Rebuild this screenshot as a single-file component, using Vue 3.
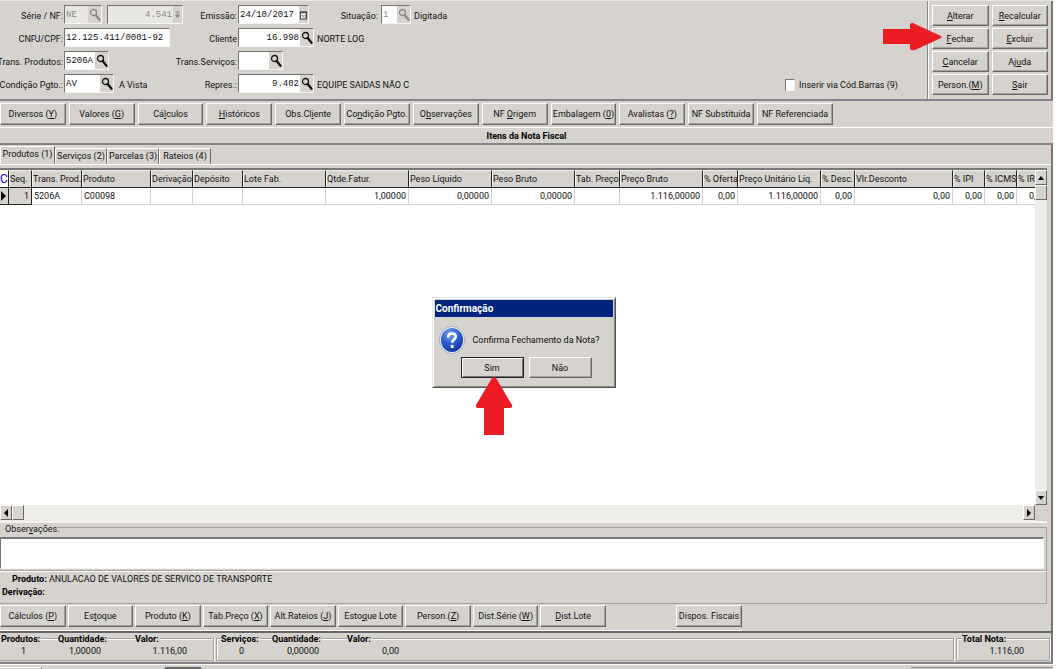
<script setup>
import { ref } from 'vue'

const split = (s) => {
  const i = s.indexOf('&')
  return i < 0 ? [s, '', ''] : [s.slice(0, i), s[i + 1], s.slice(i + 2)]
}
const actions = ['&Alterar', '&Recalcular', '&Fechar', '&Excluir', '&Cancelar', 'Aj&uda', 'Person.(&M)', '&Sair'].map(split)
const toolbar = ['Diversos (&Y)', 'Valores (&G)', 'Cá&lculos', '&Históricos', 'Obs.Cl&iente', 'Co&ndição Pgto.', 'O&bservações', 'NF &Origem', 'Embalagem (&0)', 'Avalistas (&?)', 'NF Substituída', 'NF Referenciada'].map(split)
const lower = ['Cálculos (&P)', 'Es&toque', 'Produto (&K)', 'Tab.Preço (&X)', 'Alt.Rateios (&J)', 'Esto&que Lote', 'Person.(&Z)', 'Dist.Série (&W)', '&Dist.Lote', 'Dispos. Fiscais'].map(split)
const tabs = ['Produtos (1)', 'Serviços (2)', 'Parcelas (3)', 'Rateios (4)']
const active = ref(0)
const columns = [
  ['C', 9, ''], ['Seq.', 23, '1'], ['Trans. Prod.', 50, '5206A'], ['Produto', 69, 'C00098'], ['Derivação', 42, ''],
  ['Depósito', 50, ''], ['Lote Fab.', 83, ''], ['Qtde.Fatur.', 83, '1,00000'], ['Peso Líquido', 83, '0,00000'],
  ['Peso Bruto', 83, '0,00000'], ['Tab. Preço', 45, ''], ['Preço Bruto', 83, '1.116,00000'], ['% Oferta', 35, '0,00'],
  ['Preço Unitário Líq.', 83, '1.116,00000'], ['% Desc.', 34, '0,00'], ['Vlr.Desconto', 98, '0,00'], ['% IPI', 32, '0,00'],
  ['% ICMS', 32, '0,00'], ['% IR', 32, '0,00']
]
const form = ref({
  serie: 'NE', nf: '4.541', emissao: '24/10/2017', situacao: '1', cnpj: '12.125.411/0001-92',
  cliente: '16.998', transProd: '5206A', transServ: '', pgto: 'AV', repres: '9.402', barras: false, obs: ''
})
</script>

<template>
  <div class="window">
    <svg class="defs" aria-hidden="true">
      <symbol id="lens" viewBox="0 0 12 14">
        <circle cx="4.5" cy="4.5" r="3" fill="none" stroke="currentColor" stroke-width="1.3" />
        <path d="M6.7 7 10.5 11.8" fill="none" stroke="currentColor" stroke-width="2.2" stroke-linecap="round" />
      </symbol>
    </svg>

    <header class="top">
      <form class="fields" @submit.prevent>
        <div class="row">
          <label for="serie" class="lab">Série / NF:</label>
          <div class="cell first">
            <span class="box w37 off"><input id="serie" v-model="form.serie" disabled><button type="button" aria-label="Pesquisar série" disabled><svg><use href="#lens" /></svg></button></span>
            <span class="box w75 off"><input v-model="form.nf" class="num" aria-label="Número da NF" disabled><button type="button" class="slim" aria-label="Ajustar número" disabled><svg viewBox="0 0 8 14"><path d="M2 4H6M4 4V6M2 7H6L4 9.500Z" fill="currentColor" stroke="currentColor" stroke-width="1" /></svg></button></span>
          </div>
          <label for="emissao" class="lab">Emissão:</label>
          <div class="cell">
            <span class="box w70"><input id="emissao" v-model="form.emissao"><button type="button" class="slim" aria-label="Calendário"><svg viewBox="0 0 10 14"><path d="M1.500 3.500H8.500V11.500H1.500ZM1 4.500H9" fill="#fff" stroke="#222" /><path d="M3 7.500H4.500V10M6 7H7.500V9.500H6" fill="none" stroke="#444" stroke-width=".8" /></svg></button></span>
            <label for="situacao" class="lab sit">Situação:</label>
            <span class="box w30 off white"><input id="situacao" v-model="form.situacao" disabled><button type="button" aria-label="Pesquisar situação" disabled><svg><use href="#lens" /></svg></button></span>
            <span class="desc">Digitada</span>
          </div>
        </div>
        <div class="row">
          <label for="cnpj" class="lab">CNPJ/CPF:</label>
          <div class="cell first"><span class="box w105"><input id="cnpj" v-model="form.cnpj"></span></div>
          <label for="cliente" class="lab">Cliente</label>
          <div class="cell">
            <span class="box w75"><input id="cliente" v-model="form.cliente" class="num"><button type="button" aria-label="Pesquisar cliente"><svg><use href="#lens" /></svg></button></span>
            <span class="desc">NORTE LOG</span>
          </div>
        </div>
        <div class="row">
          <label for="tprod" class="lab">Trans. Produtos:</label>
          <div class="cell first"><span class="box w45"><input id="tprod" v-model="form.transProd"><button type="button" aria-label="Pesquisar transação de produtos"><svg><use href="#lens" /></svg></button></span></div>
          <label for="tserv" class="lab">Trans.Serviços:</label>
          <div class="cell"><span class="box w45"><input id="tserv" v-model="form.transServ"><button type="button" aria-label="Pesquisar transação de serviços"><svg><use href="#lens" /></svg></button></span></div>
        </div>
        <div class="row">
          <label for="pgto" class="lab">Condição Pgto.:</label>
          <div class="cell first">
            <span class="box w50"><input id="pgto" v-model="form.pgto"><button type="button" aria-label="Pesquisar condição"><svg><use href="#lens" /></svg></button></span>
            <span class="desc">A Vista</span>
          </div>
          <label for="repres" class="lab">Repres.:</label>
          <div class="cell">
            <span class="box w75"><input id="repres" v-model="form.repres" class="num"><button type="button" aria-label="Pesquisar representante"><svg><use href="#lens" /></svg></button></span>
            <span class="desc">EQUIPE SAIDAS NÃO C</span>
          </div>
          <label class="check"><input v-model="form.barras" type="checkbox">Inserir via Cód.Barras (9)</label>
        </div>
      </form>
      <div class="actions">
        <button v-for="(b, i) in actions" :key="i" class="btn">{{ b[0] }}<u>{{ b[1] }}</u>{{ b[2] }}</button>
        <svg class="arrow-right" viewBox="0 0 60 28" aria-hidden="true"><path d="M1 6H28V1Q30 -1 33 1L59 13Q60 14 59 15L33 27Q29 28 28 26V21H1Z" fill="#ed1c24" /></svg>
      </div>
    </header>

    <nav class="toolbar">
      <button v-for="(b, i) in toolbar" :key="i" class="btn">{{ b[0] }}<u>{{ b[1] }}</u>{{ b[2] }}</button>
    </nav>
    <h1 class="title">Itens da Nota Fiscal</h1>

    <main class="body">
      <div class="tabs" role="tablist">
        <button v-for="(t, i) in tabs" :key="t" role="tab" :aria-selected="active === i" :class="['tab', { on: active === i }]" @click="active = i">{{ t }}</button>
      </div>
      <section class="grid">
        <div class="sheet">
          <table>
            <colgroup><col v-for="c in columns" :key="c[0]" :style="{ width: c[1] + 'px' }"></colgroup>
            <thead><tr><th v-for="c in columns" :key="c[0]" scope="col">{{ c[0] }}</th></tr></thead>
            <tbody>
              <tr>
                <td v-for="(c, i) in columns" :key="c[0]" :class="{ num: i === 1 || i > 6, fixed: i < 2 }">
                  <svg v-if="i === 0" class="mark" viewBox="0 0 6 10"><path d="M0 0 5 5 0 10Z" /></svg>{{ c[2] }}
                </td>
              </tr>
            </tbody>
          </table>
        </div>
        <div class="vbar">
          <button class="sb" aria-label="Rolar para cima"><svg viewBox="0 0 6 4"><path d="M0 4 3 0 6 4Z" /></svg></button>
          <span class="thumb"></span><span class="grow"></span>
          <button class="sb" aria-label="Rolar para baixo"><svg viewBox="0 0 6 4"><path d="M0 0 3 4 6 0Z" /></svg></button>
        </div>
        <div class="hbar">
          <button class="sb" aria-label="Rolar para a esquerda"><svg viewBox="0 0 4 8"><path d="M4 0 0 4 4 8Z" /></svg></button>
          <span class="thumb"></span><span class="grow"></span>
          <button class="sb" aria-label="Rolar para a direita"><svg viewBox="0 0 4 8"><path d="M0 0 4 4 0 8Z" /></svg></button>
        </div>
      </section>

      <section class="notes">
        <label for="obs">Obser<u>v</u>ações:</label>
        <textarea id="obs" v-model="form.obs"></textarea>
      </section>

      <section class="product">
        <p><b>Produto:</b> ANULACAO DE VALORES DE SERVICO DE TRANSPORTE</p>
        <p><b>Derivação:</b></p>
      </section>

      <nav class="lower">
        <button v-for="(b, i) in lower" :key="i" class="btn">{{ b[0] }}<u>{{ b[1] }}</u>{{ b[2] }}</button>
      </nav>
    </main>

    <footer class="totals">
      <dl class="group g1">
        <div><dt>Produtos:</dt><dd class="mid">1</dd></div>
        <div><dt>Quantidade:</dt><dd>1,00000</dd></div>
        <div><dt>Valor:</dt><dd>1.116,00</dd></div>
      </dl>
      <dl class="group g2">
        <div><dt>Serviços:</dt><dd class="mid">0</dd></div>
        <div><dt>Quantidade:</dt><dd>0,00000</dd></div>
        <div><dt>Valor:</dt><dd>0,00</dd></div>
      </dl>
      <dl class="group g3">
        <div><dt>Total Nota:</dt><dd>1.116,00</dd></div>
      </dl>
    </footer>
    <div class="status"><span></span><span></span><span></span></div>

    <div class="dialog" role="dialog" aria-labelledby="dlg">
      <h2 id="dlg">Confirmação</h2>
      <div class="ask">
        <svg viewBox="0 0 26 28" aria-hidden="true">
          <defs><radialGradient id="ball" cx=".4" cy=".25" r=".8"><stop offset="0" stop-color="#7fa5ee" /><stop offset=".5" stop-color="#2c5fd0" /><stop offset="1" stop-color="#0d2f9b" /></radialGradient></defs>
          <ellipse cx="13" cy="14" rx="12.500" ry="13.500" fill="#f1f4fb" stroke="#8794b8" stroke-width=".7" />
          <ellipse cx="13" cy="14" rx="11" ry="12" fill="url(#ball)" />
          <path d="M9.300 11.500V10.500Q9.500 7.500 13 7.500 16.700 7.500 16.700 10.600 16.700 12.300 14.800 13.600 13.200 14.700 13.200 16.800" fill="none" stroke="#fff" stroke-width="2.600" />
          <circle cx="13.200" cy="20.500" r="1.700" fill="#fff" />
        </svg>
        <p>Confirma Fechamento da Nota?</p>
      </div>
      <div class="choices">
        <button class="btn default">Sim</button>
        <button class="btn">Não</button>
      </div>
      <svg class="arrow-up" viewBox="0 0 38 58" aria-hidden="true"><path d="M17 1Q19 -1 21 1L37 28Q38 31 35 31H29V58H9V31H3Q0 31 1 28Z" fill="#ed1c24" /></svg>
    </div>
  </div>
</template>

<style>
body { margin: 0; background: #fff; }
</style>

<style scoped>
* { box-sizing: border-box; }
.window { position: relative; display: flex; flex-direction: column; min-height: 100vh; margin-right: 4px; background: #d6d3ce; color: #111; font: 9px/12px Roboto, sans-serif; overflow: hidden; }
.defs { position: absolute; width: 0; height: 0; }
button, input, textarea { font: inherit; color: inherit; margin: 0; padding: 0; border-radius: 0; }
p, h1, h2, dl, dd { margin: 0; }
.btn { background: #d6d3ce; border: 1px solid; border-color: #fff #6b6966 #6b6966 #fff; box-shadow: inset -1px -1px #a5a29d; white-space: nowrap; }

.top { display: flex; height: 101px; border-bottom: 2px solid #85828a; border-top: 1px solid #e8e6e2; }
.fields { flex: 1; padding-top: 4px; display: flex; flex-direction: column; gap: 4px; min-width: 0; }
.row { display: flex; align-items: flex-start; height: 19px; }
.lab { width: 63px; flex: none; display: flex; justify-content: flex-end; padding-top: 5px; white-space: nowrap; }
.cell { display: flex; align-items: flex-start; gap: 3px; margin-left: 1px; }
.first { width: 110px; gap: 5px; }
.sit { width: 66px; }
.desc { padding-top: 5px; white-space: nowrap; }
.box { display: flex; height: 19px; flex: none; background: #fff; border: 1px solid; border-color: #75736f #f6f5f2 #f6f5f2 #75736f; }
.box input { flex: 1; min-width: 0; width: 0; border: 0; background: none; padding: 0 1px; font: 9px/16px "Liberation Mono", monospace; outline: 0; }
.box button { width: 13px; border: 0; background: #d6d3ce; display: flex; align-items: center; justify-content: center; }
.box button.slim { width: 9px; }
.box svg { width: 12px; height: 14px; flex: none; }
.box .slim svg { width: 9px; }
.off { color: #8b8985; background: #e9e7e4; }
.off.white { background: #fff; }
.num { text-align: right; }
.w30 { width: 30px; }
.w37 { width: 38px; }
.w45 { width: 45px; }
.w50 { width: 50px; }
.w70 { width: 71px; }
.w75 { width: 76px; }
.w105 { width: 106px; }
.check { display: flex; align-items: center; gap: 4px; margin: 5px 29px 0 auto; white-space: nowrap; }
.check input { appearance: none; width: 10px; height: 12px; background: #fff; border: 1px solid; border-color: #75736f #f6f5f2 #f6f5f2 #75736f; }
.actions { position: relative; width: 126px; padding: 4px 3px 4px 4px; border-left: 1px solid #8d8a86; border-right: 2px solid #77777a; box-shadow: inset 1px 0 #fff; display: grid; grid-template-columns: 1fr 1fr; grid-auto-rows: 21px; gap: 2px 3px; }
.arrow-right { position: absolute; left: -46px; top: 22px; width: 60px; height: 28px; }

.toolbar { display: grid; grid-template-columns: repeat(11, 1fr) 76px; gap: 3px; max-width: 833px; height: 26px; padding: 2px 0; }
.toolbar .btn { height: 22px; }
.title { height: 18px; border-top: 1px solid #fff; border-bottom: 2px solid #85828a; font-size: 9px; line-height: 16px; text-align: center; color: #000; }

.body { display: flex; flex-direction: column; flex: 1; border-right: 2px solid #77777a; padding-right: 4px; }
.tabs { display: flex; align-items: flex-end; height: 20px; padding-top: 2px; margin-right: -4px; border-bottom: 1px solid #fff; }
.tab { height: 16px; width: 52px; border: 1px solid; border-color: #fff #6b6966 transparent #fff; background: none; white-space: nowrap; }
.tab.on { height: 18px; width: 55px; padding-bottom: 2px; }
.grid { flex: 1; min-height: 355px; margin-top: 3px; border-top: 2px solid #77777a; border-bottom: 2px solid #f4f3f0; display: grid; grid-template-columns: 1fr 12px; grid-template-rows: 1fr 16px; }
.sheet { background: #fff; overflow: hidden; min-width: 0; }
table { table-layout: fixed; border-collapse: separate; border-spacing: 0; width: 1049px; }
th { height: 18px; padding: 0 0 0 1px; text-align: left; font-weight: normal; white-space: nowrap; overflow: hidden; background: #d6d3ce; border: 1px solid; border-color: #f0eeeb #222 #222 #f0eeeb; border-left-width: 0; box-shadow: inset 1px 0 #f6f5f2; }
th:first-child { color: #00f; background: #fff; font-size: 12px; padding: 0; }
td { height: 17px; padding: 0 2px; white-space: nowrap; border-right: 1px solid #d6d3ce; border-bottom: 1px solid #d6d3ce; overflow: hidden; }
td.fixed { background: #d6d3ce; border-color: #222; }
td:first-child { padding: 0 1px; }
.mark { display: block; width: 6px; height: 10px; }
.vbar { display: flex; flex-direction: column; background: #eeece9; }
.hbar { display: flex; background: #eeece9; }
.grow { flex: 1; }
.sb { width: 12px; height: 15px; display: flex; align-items: center; justify-content: center; background: #d6d3ce; border: 1px solid; border-color: #fff #6b6966 #6b6966 #fff; }
.vbar svg { width: 6px; height: 4px; }
.hbar svg { width: 4px; height: 8px; }
.thumb { width: 12px; height: 15px; background: #d6d3ce; border: 1px solid; border-color: #fff #6b6966 #6b6966 #fff; }

.notes { margin-top: 4px; padding-right: 2px; border: 1px solid #a5a29d; border-left: 0; height: 44px; }
.notes label { display: block; width: 60px; margin-top: -4px; padding-left: 5px; background: #d6d3ce; line-height: 11px; }
.notes textarea { display: block; width: 100%; height: 32px; margin-top: 2px; border: 2px solid; border-color: #77777a #f4f3f0 #f4f3f0 #77777a; border-width: 2px 1px 1px 1px; background: #fff; resize: none; outline: 0; }
.product { border: 1px solid #a5a29d; border-top-color: #fff; border-left: 0; height: 33px; padding: 1px 2px; line-height: 13px; }
.product p:first-child { padding-left: 10px; }
b { color: #000; }
.lower { display: grid; grid-template-columns: repeat(9, 1fr) 134px; column-gap: 2px; height: 27px; padding-top: 1px; border-bottom: 1px solid #fff; max-width: 742px; }
.lower .btn { height: 22px; }
.lower .btn:last-child { margin-left: 68px; width: 66px; }

.totals { display: flex; gap: 2px; height: 33px; padding: 5px 1px 1px 0; border-top: 2px solid #66666a; border-bottom: 2px solid #85828a; border-right: 2px solid #77777a; }
.group { display: flex; border: 1px solid #a5a29d; box-shadow: inset 1px 1px #fff, 1px 0 #fff; height: 23px; }
.group dt { display: table; margin-top: -6px; padding-right: 1px; font-weight: bold; background: #d6d3ce; color: #000; }
.group dd { text-align: right; }
.group dd.mid { text-align: center; }
.g1 { width: 214px; border-left: 0; padding-left: 1px; box-shadow: inset 0 1px #fff, 1px 0 #fff; }
.g1 div:nth-child(1) { width: 57px; padding-right: 12px; }
.g1 div:nth-child(2) { width: 77px; padding-right: 34px; }
.g1 div:nth-child(3) { width: 52px; }
.g2 { flex: 1; padding-left: 4px; }
.g2 div:nth-child(1) { width: 51px; padding-right: 10px; }
.g2 div:nth-child(2) { width: 75px; padding-right: 28px; }
.g2 div:nth-child(3) { width: 52px; }
.g3 { width: 94px; padding-left: 5px; }
.g3 div { width: 62px; }
.status { display: flex; height: 6px; border-top: 1px solid #fff; padding-top: 2px; }
.status span:first-child { width: 42px; border-top: 1px solid #fff; border-right: 1px solid #6b6966; }
.status span:nth-child(2) { width: 36px; margin-left: 123px; border-top: 2px solid #66666a; }
.status span:last-child { width: 142px; margin-left: auto; border-top: 1px solid #85828a; }

.dialog { position: absolute; left: calc(50% - 95px); top: 297px; width: 184px; height: 91px; padding: 2px; background: #d6d3ce; border: 1px solid; border-color: #e8e6e2 #55534f #55534f #e8e6e2; box-shadow: inset 1px 1px #fff, inset -1px -1px #8d8a86; }
.dialog h2 { height: 17px; padding-left: 1px; background: #00247d; color: #fff; font-size: 10px; line-height: 17px; }
.ask { display: flex; align-items: center; gap: 8px; height: 38px; padding: 8px 0 0 4px; }
.ask svg { width: 26px; height: 28px; flex: none; }
.ask p { white-space: nowrap; }
.choices { display: flex; gap: 5px; padding: 2px 0 0 26px; }
.choices .btn { width: 63px; height: 21px; }
.choices .default { border-color: #222; box-shadow: inset 1px 1px #fff, inset -1px -1px #75736f; }
.arrow-up { position: absolute; left: 42px; top: 79px; width: 38px; height: 58px; }
</style>
